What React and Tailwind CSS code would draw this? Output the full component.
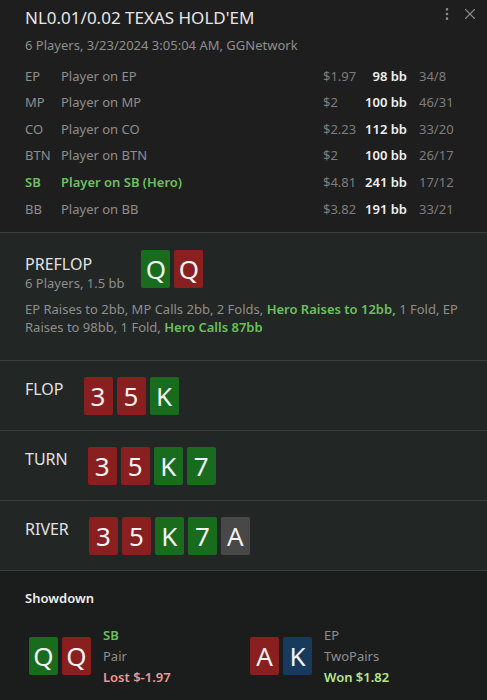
import { MoreVertical, X } from 'lucide-react';

const PLAYERS = [
  { pos: 'EP', name: 'Player on EP', money: '$1.97', bb: '98 bb', stats: '34/8' },
  { pos: 'MP', name: 'Player on MP', money: '$2', bb: '100 bb', stats: '46/31' },
  { pos: 'CO', name: 'Player on CO', money: '$2.23', bb: '112 bb', stats: '33/20' },
  { pos: 'BTN', name: 'Player on BTN', money: '$2', bb: '100 bb', stats: '26/17' },
  { pos: 'SB', name: 'Player on SB (Hero)', money: '$4.81', bb: '241 bb', stats: '17/12', hero: true },
  { pos: 'BB', name: 'Player on BB', money: '$3.82', bb: '191 bb', stats: '33/21' },
];

const SUIT_BG = {
  h: 'bg-[#8a1f1f]',
  s: 'bg-[#196b1e]',
  c: 'bg-[#484848]',
  d: 'bg-[#183a5e]',
};

function Card({ rank, suit }) {
  return (
    <div
      className={`w-[29px] h-[38px] rounded-[2px] flex items-center justify-center text-[26px] leading-none text-[#f2f2f2] ${SUIT_BG[suit]}`}
    >
      {rank}
    </div>
  );
}

function Cards({ cards }) {
  return (
    <div className="flex gap-[4px]">
      {cards.map((c, i) => (
        <Card key={i} rank={c[0]} suit={c[1]} />
      ))}
    </div>
  );
}

function Street({ label, cards }) {
  return (
    <div className="flex items-start gap-[20px] px-[25px] pt-[16px] pb-[15px] border-b border-[#3a3d3b]">
      <div className="text-[16px] text-[#e2e2e2] pt-[2px] leading-[20px]">{label}</div>
      <Cards cards={cards} />
    </div>
  );
}

export default function App() {
  return (
    <div className="w-full h-[700px] overflow-hidden bg-[#222624] font-['Noto_Sans',sans-serif]">
      {/* header */}
      <div className="bg-[#1e1e1e] border-b border-[#3a3d3b] px-[25px] pt-[6px] pb-[9px] relative">
        <div className="absolute top-[5px] right-[8px] flex items-center gap-[6px] text-[#8a8a8a]">
          <MoreVertical size={16} strokeWidth={2} />
          <X size={18} strokeWidth={1.5} />
        </div>
        <h1 className="text-[17px] leading-[24px] text-[#e6e6e6]">NL0.01/0.02 TEXAS HOLD'EM</h1>
        <p className="text-[13px] leading-[18px] mt-[6px] text-[#8e8e8e]">
          6 Players, 3/23/2024 3:05:04 AM, GGNetwork
        </p>
        <div className="mt-[9px] flex flex-col">
          {PLAYERS.map((p) => (
            <div key={p.pos} className="flex items-center h-[26.6px] text-[13px] whitespace-nowrap">
              <span className={`w-[36px] ${p.hero ? 'text-[#6cc05e] font-semibold' : 'text-[#8e8e8e]'}`}>{p.pos}</span>
              <span className={`flex-1 ${p.hero ? 'text-[#6cc05e] font-semibold' : 'text-[#8e8e8e]'}`}>{p.name}</span>
              <span className="w-[36px] text-[#7d7d7d]">{p.money}</span>
              <span className="w-[48px] text-right text-[#f0f0f0] font-semibold">{p.bb}</span>
              <span className="w-[55px] pl-[12px] text-[#7d7d7d]">{p.stats}</span>
            </div>
          ))}
        </div>
      </div>

      {/* preflop */}
      <div className="px-[25px] pt-[17px] pb-[24px] border-b border-[#3a3d3b]">
        <div className="flex items-start gap-[17px]">
          <div className="pt-[4px]">
            <div className="text-[16px] leading-[20px] text-[#e2e2e2]">PREFLOP</div>
            <div className="text-[13px] leading-[18px] text-[#8e8e8e]">6 Players, 1.5 bb</div>
          </div>
          <Cards cards={['Qs', 'Qh']} />
        </div>
        <p className="mt-[8px] text-[13px] leading-[18px] text-[#8e8e8e]">
          EP Raises to 2bb, MP Calls 2bb, 2 Folds,{' '}
          <span className="text-[#6cc05e] font-semibold">Hero Raises to 12bb,</span> 1 Fold, EP Raises to 98bb, 1 Fold,{' '}
          <span className="text-[#6cc05e] font-semibold">Hero Calls 87bb</span>
        </p>
      </div>

      <Street label="FLOP" cards={['3h', '5h', 'Ks']} />
      <Street label="TURN" cards={['3h', '5h', 'Ks', '7s']} />
      <Street label="RIVER" cards={['3h', '5h', 'Ks', '7s', 'Ac']} />

      {/* showdown */}
      <div className="bg-[#1b1d1c] h-full px-[25px] pt-[18px]">
        <div className="text-[13px] font-semibold text-[#eeeeee] leading-[18px]">Showdown</div>
        <div className="flex mt-[18px] pl-[4px]">
          <div className="flex items-center gap-[12px] w-[221px]">
            <div className="flex gap-[4px]">
              <Card rank="Q" suit="s" />
              <Card rank="Q" suit="h" />
            </div>
            <div className="flex flex-col text-[13px] leading-[21px]">
              <span className="text-[#6cc05e] font-semibold">SB</span>
              <span className="text-[#8e8e8e]">Pair</span>
              <span className="text-[#e89a98] font-semibold">Lost $-1.97</span>
            </div>
          </div>
          <div className="flex items-center gap-[12px]">
            <div className="flex gap-[4px]">
              <Card rank="A" suit="h" />
              <Card rank="K" suit="d" />
            </div>
            <div className="flex flex-col text-[13px] leading-[21px]">
              <span className="text-[#8e8e8e]">EP</span>
              <span className="text-[#8e8e8e]">TwoPairs</span>
              <span className="text-[#b8e68e] font-semibold">Won $1.82</span>
            </div>
          </div>
        </div>
      </div>
    </div>
  );
}
